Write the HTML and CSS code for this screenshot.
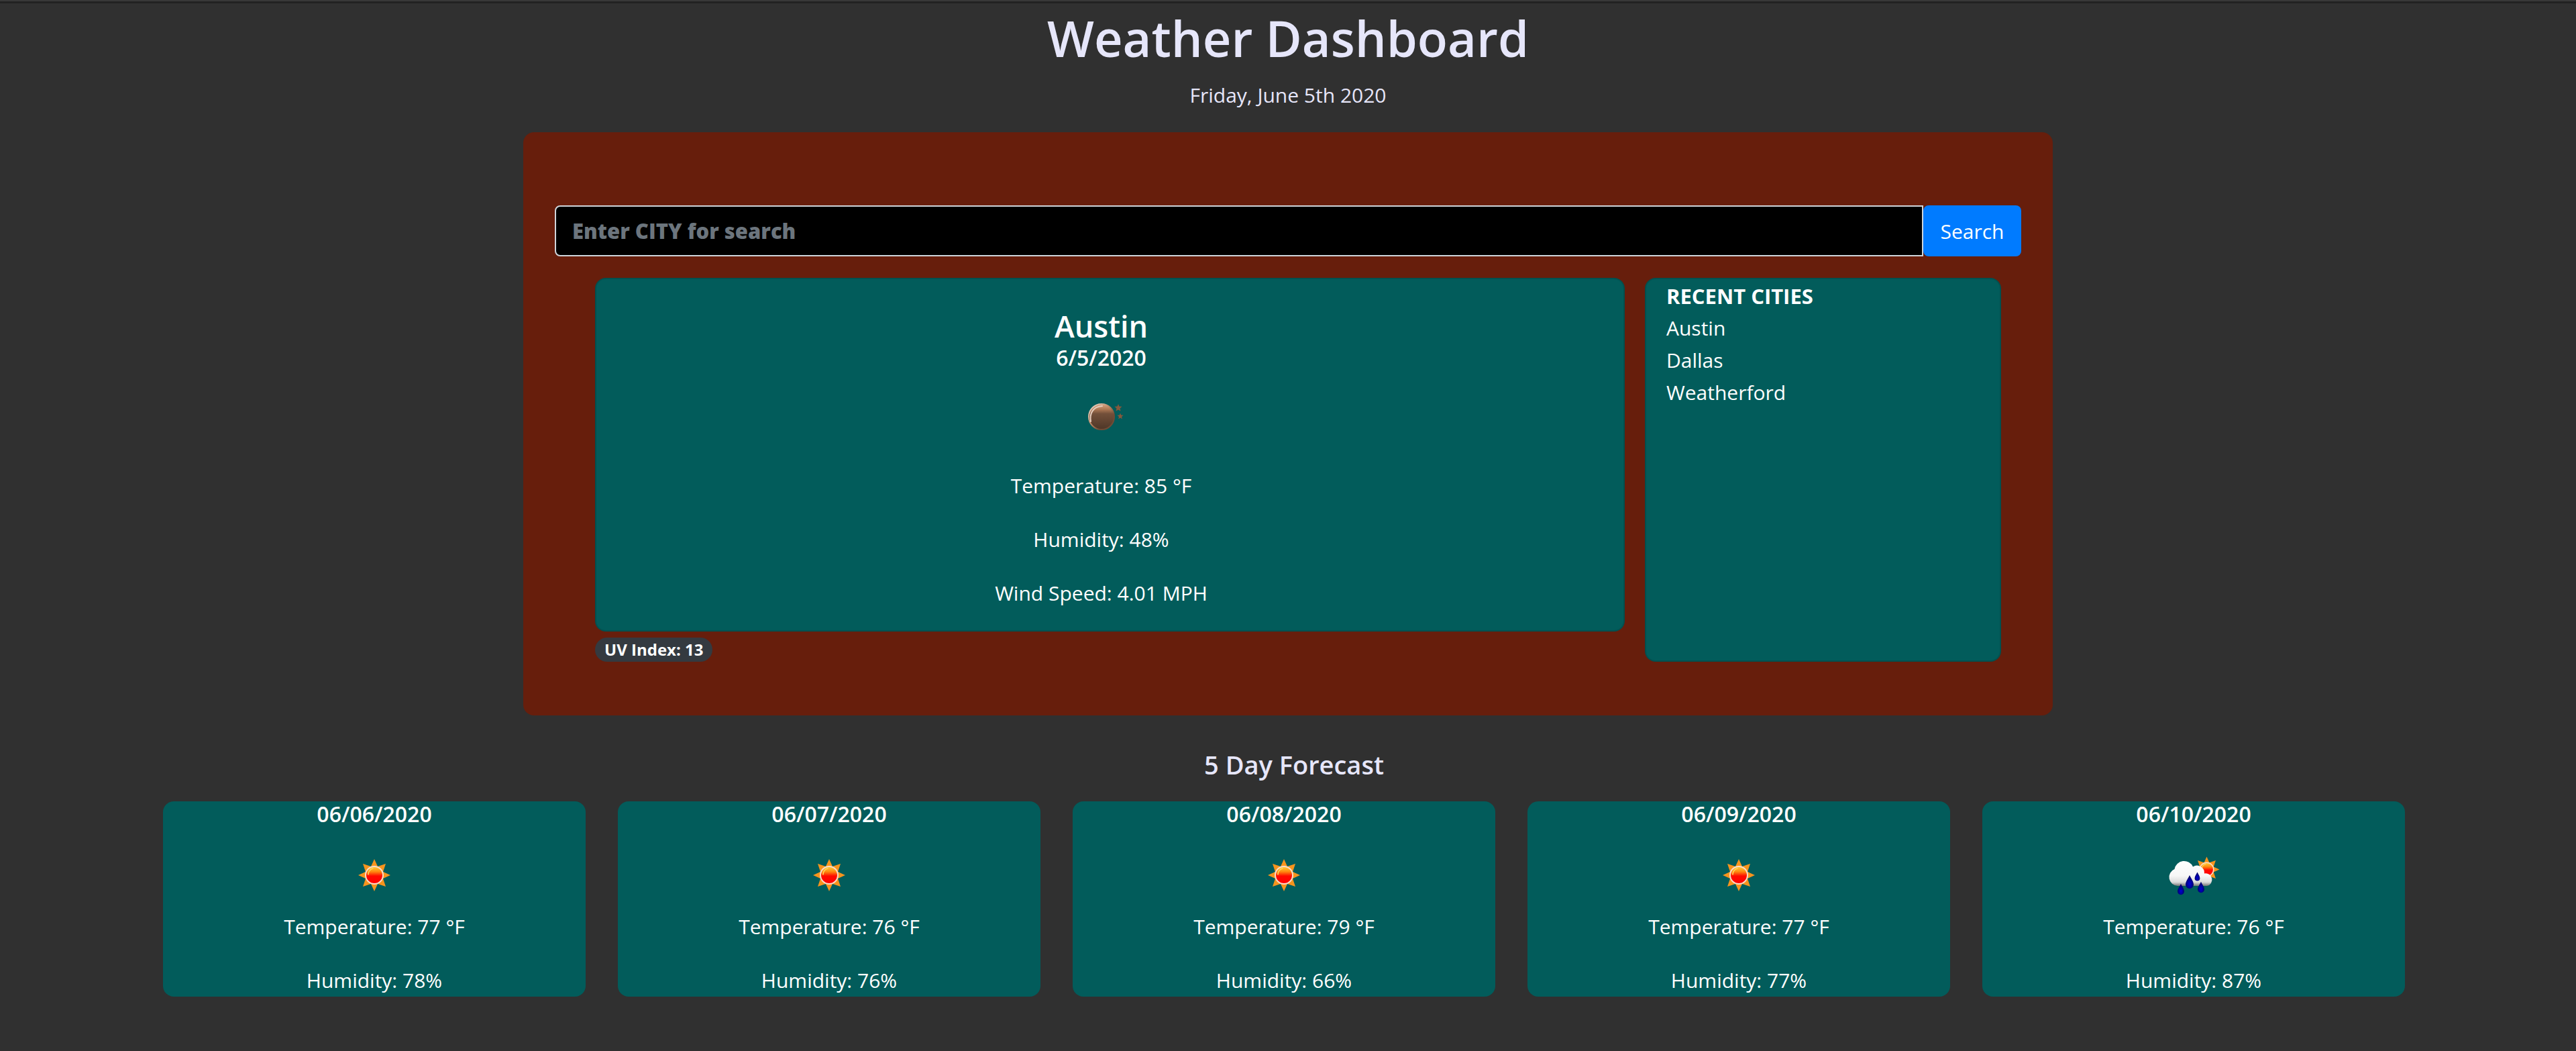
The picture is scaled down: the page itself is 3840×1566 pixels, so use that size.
FILE: index.html
```html
<!DOCTYPE html>
<html lang="en">
<head>
<meta charset="utf-8">
<title>Weather Dashboard</title>
<link rel="stylesheet" href="styles.css">
</head>
<body>
<svg class="defs" aria-hidden="true">
  <defs>
    <linearGradient id="sun-fill" x1="0" y1="0" x2="0" y2="1">
      <stop offset="0" stop-color="#ffd23c"/>
      <stop offset=".3" stop-color="#ff8a10"/>
      <stop offset=".55" stop-color="#ff0a00"/>
      <stop offset="1" stop-color="#ff0000"/>
    </linearGradient>
    <linearGradient id="moon-fill" x1="0" y1="0" x2="0" y2="1">
      <stop offset="0" stop-color="#d9a483"/>
      <stop offset=".2" stop-color="#b07a55"/>
      <stop offset=".38" stop-color="#73503a"/>
      <stop offset="1" stop-color="#4e3627"/>
    </linearGradient>
    <linearGradient id="moon-rim" x1="0" y1="0" x2="1" y2="1">
      <stop offset="0" stop-color="#f3e4da"/>
      <stop offset=".45" stop-color="#b98663"/>
      <stop offset=".7" stop-color="#6f4c36"/>
    </linearGradient>
    <linearGradient id="cloud-fill" gradientUnits="userSpaceOnUse" x1="0" y1="28" x2="0" y2="66">
      <stop offset="0" stop-color="#ffffff"/>
      <stop offset=".6" stop-color="#f7f7f7"/>
      <stop offset=".85" stop-color="#dcdcdc"/>
      <stop offset="1" stop-color="#777777"/>
    </linearGradient>
    <radialGradient id="drop-fill" cx=".5" cy=".65" r=".5">
      <stop offset="0" stop-color="#0000d8"/>
      <stop offset="1" stop-color="#00006e"/>
    </radialGradient>
    <symbol id="sun" viewBox="0 0 100 100">
      <path fill="#f7941d" d="M50 26l5 11 12-4-4 12 11 5-11 5 4 12-12-4-5 11-5-11-12 4 4-12-11-5 11-5-4-12 12 4z"/>
      <circle cx="50" cy="50" r="13" fill="url(#sun-fill)" stroke="#f8dcc8" stroke-width="2"/>
      <path d="M41 49a9 9 0 0 1 7-9" fill="none" stroke="#ffd75a" stroke-width="1.5" stroke-linecap="round"/>
    </symbol>
    <path id="drop" d="M0-10C2-5 6-1 6 4A6 6 0 0 1-6 4C-6-1-2-5 0-10z" fill="url(#drop-fill)"/>
    <symbol id="rain" viewBox="0 0 100 100">
      <use href="#sun" x="30" y="2" width="79" height="79"/>
      <path fill="url(#cloud-fill)" d="M26 66A13 13 0 0 1 21.500 41A14.500 14.500 0 0 1 49 37.500A11 11 0 0 1 66 47.500A9.400 9.400 0 1 1 70 66z"/>
      <use href="#drop" x="44" y="60"/>
      <use href="#drop" transform="translate(55.500 52) scale(.65)"/>
      <use href="#drop" transform="translate(31 71) scale(.82)"/>
      <use href="#drop" transform="translate(61 68) scale(.82)"/>
    </symbol>
  </defs>
</svg>

<header class="site-header">
  <h1 class="site-title">Weather Dashboard</h1>
  <p class="today">Friday, June 5th 2020</p>
</header>

<main>
  <section class="panel">
    <form class="search">
      <input class="search-input" type="text" aria-label="City" placeholder="Enter CITY for search">
      <button class="search-button" type="button">Search</button>
    </form>
    <div class="panel-grid">
      <div class="current-column">
        <article class="card current">
          <h2 class="city">Austin</h2>
          <h3 class="date">6/5/2020</h3>
          <svg class="icon" viewBox="0 0 100 100" role="img" aria-label="Clear night">
            <circle cx="50" cy="50" r="19" fill="url(#moon-fill)" stroke="url(#moon-rim)" stroke-width="2"/>
            <path d="M34 57C32 45 37 35 51 34" fill="none" stroke="#e6cdbd" stroke-width="2" stroke-linecap="round"/>
            <path fill="#86583c" d="M75 31l1.500 3.500 4 .3-3 2.700 1 4-3.500-2-3.500 2 1-4-3-2.700 4-.3z"/>
            <path fill="#86583c" d="M78 44.500l1.200 3 3.300.2-2.500 2.200.8 3.300-2.800-1.700-2.800 1.700.8-3.300-2.500-2.200 3.300-.2z"/>
          </svg>
          <p class="reading">Temperature: 85 °F</p>
          <p class="reading">Humidity: 48%</p>
          <p class="reading">Wind Speed: 4.01 MPH</p>
        </article>
        <span class="badge">UV Index: 13</span>
      </div>
      <aside class="card recent">
        <h2 class="recent-title">RECENT CITIES</h2>
        <ul class="recent-list">
          <li>Austin</li>
          <li>Dallas</li>
          <li>Weatherford</li>
        </ul>
      </aside>
    </div>
  </section>

  <section class="forecast">
    <h2 class="forecast-title">5 Day Forecast</h2>
    <div class="forecast-grid">
      <article class="day">
        <h3 class="date">06/06/2020</h3>
        <svg class="icon" role="img" aria-label="Sunny"><use href="#sun"/></svg>
        <p class="reading">Temperature: 77 °F</p>
        <p class="reading">Humidity: 78%</p>
      </article>
      <article class="day">
        <h3 class="date">06/07/2020</h3>
        <svg class="icon" role="img" aria-label="Sunny"><use href="#sun"/></svg>
        <p class="reading">Temperature: 76 °F</p>
        <p class="reading">Humidity: 76%</p>
      </article>
      <article class="day">
        <h3 class="date">06/08/2020</h3>
        <svg class="icon" role="img" aria-label="Sunny"><use href="#sun"/></svg>
        <p class="reading">Temperature: 79 °F</p>
        <p class="reading">Humidity: 66%</p>
      </article>
      <article class="day">
        <h3 class="date">06/09/2020</h3>
        <svg class="icon" role="img" aria-label="Sunny"><use href="#sun"/></svg>
        <p class="reading">Temperature: 77 °F</p>
        <p class="reading">Humidity: 77%</p>
      </article>
      <article class="day">
        <h3 class="date">06/10/2020</h3>
        <svg class="icon" role="img" aria-label="Rain"><use href="#rain"/></svg>
        <p class="reading">Temperature: 76 °F</p>
        <p class="reading">Humidity: 87%</p>
      </article>
    </div>
  </section>
</main>
</body>
</html>
```
FILE: styles.css
```css
* {
  box-sizing: border-box;
}

body,
h1,
h2,
h3,
p,
ul {
  margin: 0;
}

body {
  background: #303030;
  color: #ffffff;
  font-family: "Open Sans", "Noto Sans", sans-serif;
  font-size: 30px;
  line-height: 48px;
}

.defs {
  position: absolute;
  width: 0;
  height: 0;
}

/* Header */
.site-header {
  border-top: 2px solid #383838;
  box-shadow: inset 0 3px #222222;
  padding: 7px 0 31px;
  text-align: center;
  color: #e6e6fa;
}

.site-title {
  margin-bottom: 13px;
  font-size: 74px;
  font-weight: 600;
  line-height: 96px;
}

/* Search panel */
.panel {
  max-width: 2280px;
  margin: 0 auto;
  padding: 109px 47px 80px;
  border-radius: 16px;
  background: #671e0c;
}

.search {
  display: flex;
  margin-bottom: 32px;
}

.search-input {
  flex: 1;
  min-width: 0;
  height: 76px;
  padding: 0 24px;
  border: 2px solid #ced4da;
  border-radius: 8px 0 0 8px;
  background: #000000;
  color: #ffffff;
  font: 800 31px "Open Sans", "Noto Sans", sans-serif;
}

.search-input::placeholder {
  color: #6c757d;
  opacity: 1;
}

.search-button {
  height: 76px;
  width: 146px;
  padding: 0;
  border: 0;
  border-radius: 8px;
  background: #007bff;
  color: #ffffff;
  font: 400 30px "Open Sans", "Noto Sans", sans-serif;
}

.panel-grid {
  display: grid;
  grid-template-columns: 1535fr 531fr;
  gap: 30px;
  padding: 0 30px 0 60px;
}

.card {
  border: 2px solid rgba(0, 0, 0, 0.125);
  border-radius: 16px;
  background: #025c5b;
}

.current-column {
  display: flex;
  flex-direction: column;
  align-items: flex-start;
  gap: 9px;
}

.current {
  align-self: stretch;
  padding: 42px 26px 31px 0;
  text-align: center;
}

.city {
  font-size: 45px;
  font-weight: 600;
  line-height: 56px;
}

.date {
  font-size: 32px;
  font-weight: 600;
  line-height: 38px;
}

.icon {
  display: block;
  width: 100px;
  height: 100px;
  margin: 22px auto 3px;
}

.current .icon {
  margin-top: 19px;
  margin-bottom: 29px;
}

.reading + .reading {
  margin-top: 32px;
}

.badge {
  padding: 0 14px;
  border-radius: 18px;
  background: #343a40;
  font-size: 24px;
  font-weight: 700;
  line-height: 36px;
}

.recent {
  padding: 1px 30px;
}

.recent-title {
  font-size: 31px;
  font-weight: 700;
  line-height: 48px;
}

.recent-list {
  padding: 0;
  list-style: none;
}

/* Forecast */
.forecast {
  padding: 49px 255px 80px 243px;
}

.forecast-title {
  margin-bottom: 31px;
  padding-left: 30px;
  color: #e6e6fa;
  font-size: 38px;
  font-weight: 600;
  line-height: 48px;
  text-align: center;
}

.forecast-grid {
  display: grid;
  grid-template-columns: repeat(5, 1fr);
  gap: 48px;
}

.day {
  border-radius: 16px;
  background: #025c5b;
  text-align: center;
}
```
